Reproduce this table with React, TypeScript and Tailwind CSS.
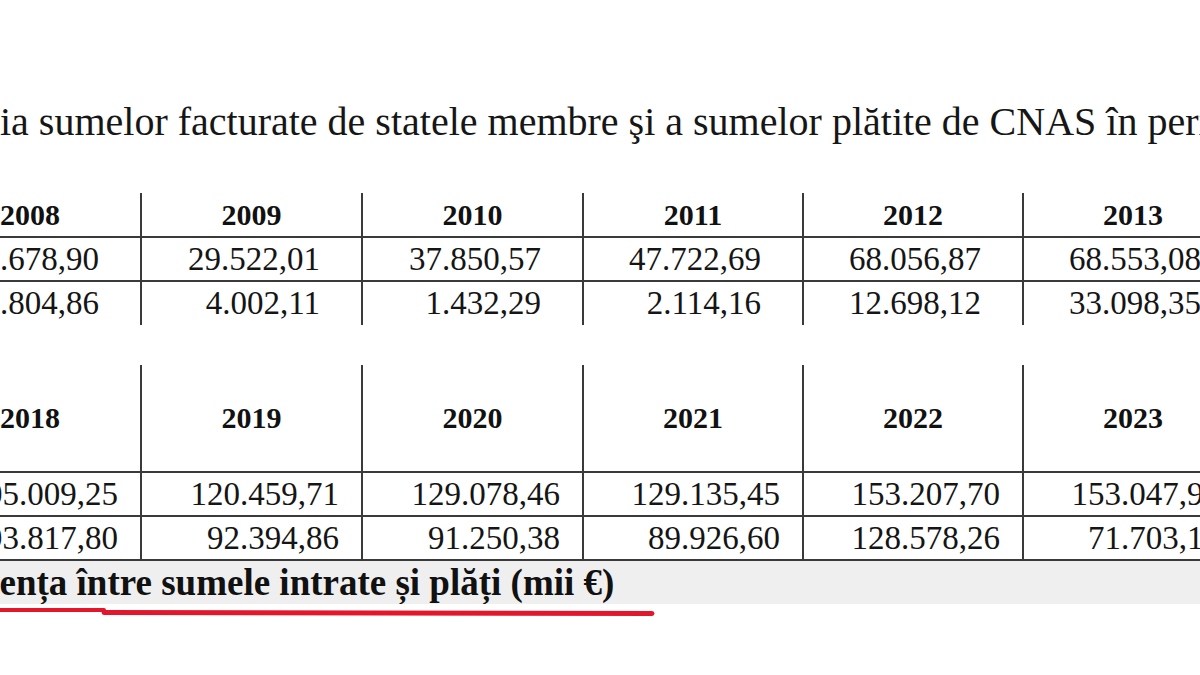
import React from "react";

const serif = { fontFamily: '"Liberation Serif", "Times New Roman", serif' };

const years1 = ["2008", "2009", "2010", "2011", "2012", "2013"];
const rowA1 = ["21.678,90", "29.522,01", "37.850,57", "47.722,69", "68.056,87", "68.553,08"];
const rowB1 = ["14.804,86", "4.002,11", "1.432,29", "2.114,16", "12.698,12", "33.098,35"];

const years2 = ["2018", "2019", "2020", "2021", "2022", "2023"];
const rowA2 = ["105.009,25", "120.459,71", "129.078,46", "129.135,45", "153.207,70", "153.047,96"];
const rowB2 = ["93.817,80", "92.394,86", "91.250,38", "89.926,60", "128.578,26", "71.703,15"];

const grid = "grid grid-cols-[220px_221px_221px_220px_220px_220px]";

function Cell({
  i,
  children,
  className,
}: {
  i: number;
  children: React.ReactNode;
  className: string;
}) {
  return (
    <div className={`${i > 0 ? "border-l-2 border-[#3a3a3a]" : ""} ${className}`}>
      {children}
    </div>
  );
}

function Table({
  years,
  a,
  b,
  headerH,
  rowH1,
  rowH2,
  pad,
  bottom,
}: {
  years: string[];
  a: string[];
  b: string[];
  headerH: string;
  rowH1: string;
  rowH2: string;
  pad: string;
  bottom: boolean;
}) {
  return (
    <div className="ml-[-80px] w-[1322px]">
      <div className={grid}>
        {years.map((y, i) => (
          <Cell
            key={y}
            i={i}
            className={`${headerH} flex items-center justify-center text-[30px] font-bold leading-none text-[#111]`}
          >
            {y}
          </Cell>
        ))}
      </div>
      <div className={`${grid} border-t-2 border-[#3a3a3a]`}>
        {a.map((v, i) => (
          <Cell
            key={i}
            i={i}
            className={`${rowH1} flex items-center justify-end ${pad} text-[33px] leading-none text-[#151515]`}
          >
            {v}
          </Cell>
        ))}
      </div>
      <div
        className={`${grid} border-t-2 border-[#3a3a3a] ${bottom ? "border-b-2" : ""}`}
      >
        {b.map((v, i) => (
          <Cell
            key={i}
            i={i}
            className={`${rowH2} flex items-center justify-end ${pad} text-[33px] leading-none text-[#151515]`}
          >
            {v}
          </Cell>
        ))}
      </div>
    </div>
  );
}

export default function App() {
  return (
    <div
      className="relative w-[1200px] h-[675px] overflow-hidden bg-white text-black"
      style={serif}
    >
      <div className="mt-[100px] h-[44px] whitespace-nowrap text-[40px] leading-[44px] text-[#161616]">
        ia sumelor facturate de statele membre şi a sumelor plătite de CNAS în perioada
      </div>

      <div className="mt-[49px]">
        <Table
          years={years1}
          a={rowA1}
          b={rowB1}
          headerH="h-[43px]"
          rowH1="h-[42px]"
          rowH2="h-[43px]"
          pad="pr-[41px]"
          bottom={false}
        />
      </div>

      <div className="mt-[40px]">
        <Table
          years={years2}
          a={rowA2}
          b={rowB2}
          headerH="h-[106px]"
          rowH1="h-[42px]"
          rowH2="h-[42px]"
          pad="pr-[22px]"
          bottom={true}
        />
      </div>

      <div className="h-[43px] bg-[#efefef] overflow-hidden whitespace-nowrap">
        <div className="ml-[-82px] text-[37px] font-bold leading-[43px] text-[#111]">
          Diferența între sumele intrate și plăți (mii €)
        </div>
      </div>

      <svg
        className="absolute left-0 top-[604px]"
        width="670"
        height="16"
        viewBox="0 0 670 16"
      >
        <path d="M-4 6 L104 6" stroke="#e3162c" strokeWidth="4" strokeLinecap="round" fill="none" />
        <path d="M104 8.5 L652 9.5" stroke="#e3162c" strokeWidth="5" strokeLinecap="round" fill="none" />
      </svg>
    </div>
  );
}
